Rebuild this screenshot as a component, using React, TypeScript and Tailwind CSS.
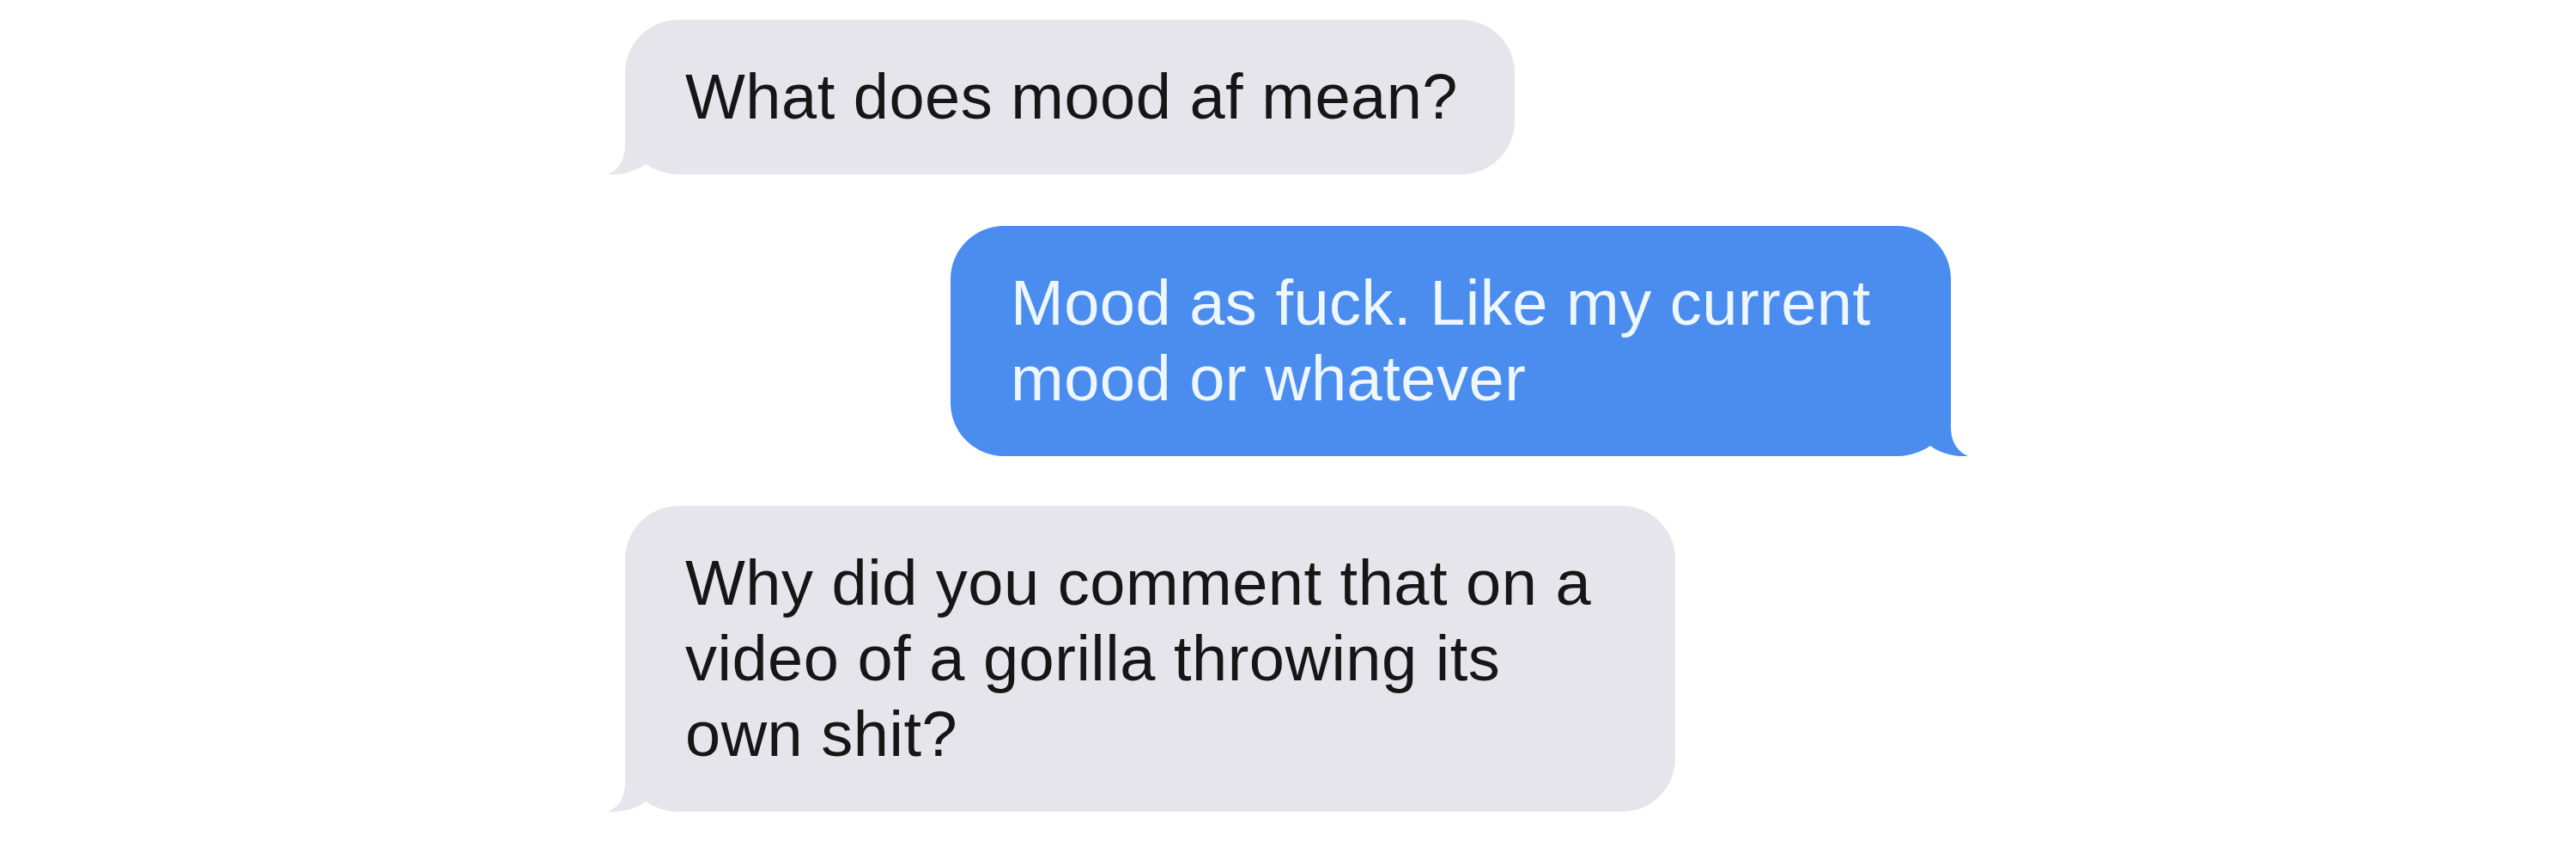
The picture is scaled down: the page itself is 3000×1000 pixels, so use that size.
import React from 'react'

type Msg = { from: 'them' | 'me'; lines: string[]; width: string }

const messages: Msg[] = [
  { from: 'them', lines: ['What does mood af mean?'], width: 'w-[1036px]' },
  { from: 'me', lines: ['Mood as fuck. Like my current', 'mood or whatever'], width: 'w-[1165px]' },
  {
    from: 'them',
    lines: ['Why did you comment that on a', 'video of a gorilla throwing its', 'own shit?'],
    width: 'w-[1223px]',
  },
]

// little curled tail at the bottom corner of each bubble
function Tail({ side, color }: { side: 'left' | 'right'; color: string }) {
  return (
    <svg
      width="100"
      height="90"
      viewBox="0 0 100 90"
      className={
        side === 'left'
          ? 'absolute -left-[20px] bottom-0'
          : 'absolute -right-[20px] bottom-0 -scale-x-100'
      }
    >
      <path
        d="M20 0 L20 56 C20 74 12 85 0 90 C14 91 30 88 44 78 C58 88 76 90 100 90 L100 0 Z"
        fill={color}
      />
    </svg>
  )
}

function Bubble({ msg }: { msg: Msg }) {
  const mine = msg.from === 'me'
  return (
    <div
      className={`relative ${msg.width} rounded-[62px] pl-[70px] py-[46px] ${
        mine ? 'self-end bg-[#4a8def] text-[#eef6ff]' : 'self-start bg-[#e6e5eb] text-[#161616]'
      }`}
    >
      <Tail side={mine ? 'right' : 'left'} color={mine ? '#4a8def' : '#e6e5eb'} />
      {msg.lines.map((l) => (
        <div key={l} className="relative whitespace-nowrap text-[74px] leading-[88px] tracking-[0.5px]">
          {l}
        </div>
      ))}
    </div>
  )
}

export default function App() {
  return (
    <div
      className="w-[3000px] h-[1000px] bg-white overflow-hidden"
      style={{ fontFamily: '"Liberation Sans", Arial, Helvetica, sans-serif' }}
    >
      <div className="mx-auto w-[1544px] pt-[23px] flex flex-col">
        <Bubble msg={messages[0]} />
        <div className="mt-[60px] flex flex-col">
          <Bubble msg={messages[1]} />
        </div>
        <div className="mt-[58px] flex flex-col">
          <Bubble msg={messages[2]} />
        </div>
      </div>
    </div>
  )
}
